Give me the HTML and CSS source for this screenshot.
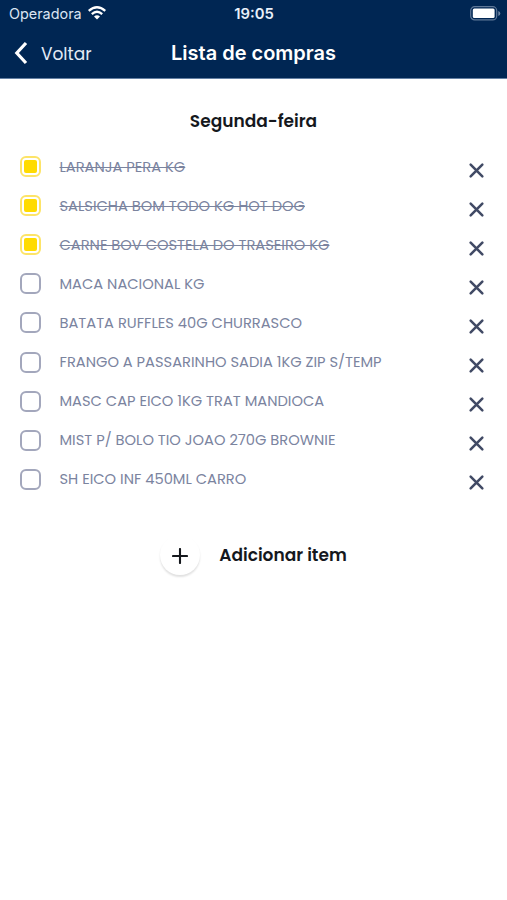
FILE: index.html
```html
<!DOCTYPE html>
<html lang="pt-BR">
<head>
<meta charset="utf-8">
<title>Lista de compras</title>
<link rel="stylesheet" href="styles.css">
</head>
<body>
<header class="header">
  <div class="status">
    <div class="carrier"><span class="carrier-name">Operadora</span>
      <svg class="wifi" viewBox="0 0 18 14"><path d="M.7 4.9Q9-2.5 17.3 4.9M3.8 8.2Q9 3.4 14.2 8.2" fill="none" stroke="#fff" stroke-width="2.3"/><path d="M6 10.6Q9 8 12 10.6L9 13.6Z" fill="#fff"/></svg>
    </div>
    <time class="clock">19:05</time>
    <svg class="battery" viewBox="0 0 31 15"><rect x=".7" y=".7" width="26" height="13.2" rx="4" fill="none" stroke="#5f7898" stroke-width="1.2"/><rect x="2.8" y="2.6" width="21.8" height="9.4" rx="1.5" fill="#fff"/><path d="M28.3 5v5q2-.8 2-2.5t-2-2.5" fill="#7188a5"/></svg>
  </div>
  <nav class="nav">
    <a class="back"><svg class="chevron" viewBox="0 0 14 24"><path d="M12 2 2.8 12 12 22" fill="none" stroke="#fff" stroke-width="3.2"/></svg><span class="back-label">Voltar</span></a>
    <h1 class="title">Lista de compras</h1>
    <span></span>
  </nav>
</header>
<main>
  <h2 class="day">Segunda-feira</h2>
  <ul class="list">
    <li class="item done"><i class="box"></i><span class="name">LARANJA PERA KG</span><svg class="x" viewBox="0 0 16 16"><path d="m2.5 2.5 11 11M13.5 2.5l-11 11"/></svg></li>
    <li class="item done"><i class="box"></i><span class="name">SALSICHA BOM TODO KG HOT DOG</span><svg class="x" viewBox="0 0 16 16"><path d="m2.5 2.5 11 11M13.5 2.5l-11 11"/></svg></li>
    <li class="item done"><i class="box"></i><span class="name">CARNE BOV COSTELA DO TRASEIRO KG</span><svg class="x" viewBox="0 0 16 16"><path d="m2.5 2.5 11 11M13.5 2.5l-11 11"/></svg></li>
    <li class="item"><i class="box"></i><span class="name">MACA NACIONAL KG</span><svg class="x" viewBox="0 0 16 16"><path d="m2.5 2.5 11 11M13.5 2.5l-11 11"/></svg></li>
    <li class="item"><i class="box"></i><span class="name">BATATA RUFFLES 40G CHURRASCO</span><svg class="x" viewBox="0 0 16 16"><path d="m2.5 2.5 11 11M13.5 2.5l-11 11"/></svg></li>
    <li class="item"><i class="box"></i><span class="name">FRANGO A PASSARINHO SADIA 1KG ZIP S/TEMP</span><svg class="x" viewBox="0 0 16 16"><path d="m2.5 2.5 11 11M13.5 2.5l-11 11"/></svg></li>
    <li class="item"><i class="box"></i><span class="name">MASC CAP EICO 1KG TRAT MANDIOCA</span><svg class="x" viewBox="0 0 16 16"><path d="m2.5 2.5 11 11M13.5 2.5l-11 11"/></svg></li>
    <li class="item"><i class="box"></i><span class="name">MIST P/ BOLO TIO JOAO 270G BROWNIE</span><svg class="x" viewBox="0 0 16 16"><path d="m2.5 2.5 11 11M13.5 2.5l-11 11"/></svg></li>
    <li class="item"><i class="box"></i><span class="name">SH EICO INF 450ML CARRO</span><svg class="x" viewBox="0 0 16 16"><path d="m2.5 2.5 11 11M13.5 2.5l-11 11"/></svg></li>
  </ul>
  <div class="add">
    <button class="plus" aria-label="Adicionar"><svg viewBox="0 0 16 16"><path d="M8 1v14M1 8h14"/></svg></button>
    <span class="add-label">Adicionar item</span>
  </div>
</main>
</body>
</html>
```
FILE: styles.css
```css
* { box-sizing: border-box; }
body { margin: 0; min-height: 900px; background: #fff; font-family: Poppins, Inter, sans-serif; }
h1, h2, ul { margin: 0; padding: 0; }
svg { display: block; }

.header { height: 79px; background: #002653; border-bottom: 1px solid #6480a3; color: #fff; font-family: Inter, sans-serif; }
.status { display: grid; grid-template-columns: 1fr auto 1fr; align-items: center; height: 28px; padding: 0 6px 0 9px; }
.carrier { display: flex; align-items: center; gap: 6px; font-size: 14.4px; line-height: 20px; color: #dae4f2; }
.wifi { width: 18px; height: 14px; margin-top: -2px; }
.clock { margin-right: 2px; font-size: 14.8px; font-weight: 600; line-height: 20px; color: #e9f0fa; }
.battery { width: 31px; height: 15px; margin-top: -2px; justify-self: end; }
.nav { display: grid; grid-template-columns: 1fr auto 1fr; align-items: center; height: 50px; padding: 0 14px; }
.back { display: flex; align-items: center; gap: 13px; font-size: 17px; font-family: Poppins, Inter, sans-serif; color: #e3ebf6; }
.back-label { padding-top: 1px; }
.chevron { width: 14px; height: 24px; margin-top: -1px; }
.title { font-size: 20px; font-weight: 600; line-height: 28px; margin-top: -1px; }

.day { padding-top: 29px; text-align: center; font-size: 17px; font-weight: 600; line-height: 26px; color: #15181d; }
.list { list-style: none; padding: 13px 22px 0 20px; }
.item { display: flex; align-items: center; height: 39.1px; }
.box { flex: none; display: grid; place-items: center; width: 21px; height: 21px; border: 2px solid #a3a7bc; border-radius: 6px; }
.name { flex: none; margin-left: 18.5px; font-size: 14.67px; line-height: 20px; color: #7b849f; white-space: nowrap; }
.x { width: 17px; height: 17px; margin: 7px 0 0 auto; fill: none; stroke: #414a65; stroke-width: 2.4; stroke-linecap: round; }
.done .box { border-color: #fde468; }
.done .box::after { content: ""; width: 13px; height: 13px; border-radius: 2px; background: #ffdb00; }
.done .name { text-decoration: line-through; text-decoration-thickness: 1px; }

.add { display: flex; align-items: center; justify-content: center; gap: 19px; margin-top: 36px; }
.plus { display: grid; place-items: center; width: 40px; height: 40px; padding: 0; border: 0; border-radius: 50%; background: #fff; box-shadow: 0 2px 2px rgba(0, 0, 0, .12); }
.plus svg { width: 16px; height: 16px; margin-top: 2px; fill: none; stroke: #15181d; stroke-width: 2.1; stroke-linecap: round; }
.add-label { font-size: 17px; font-weight: 600; line-height: 26px; color: #15181d; }
```
